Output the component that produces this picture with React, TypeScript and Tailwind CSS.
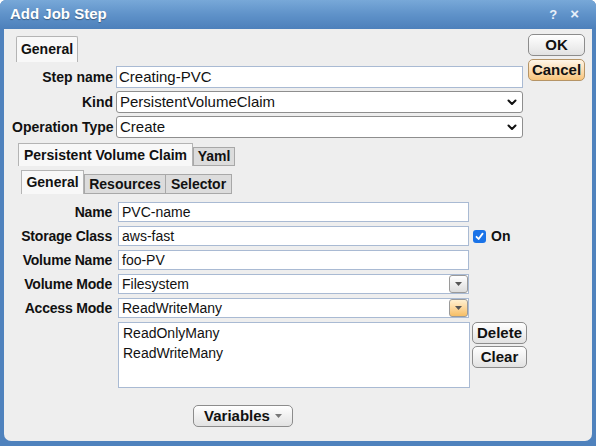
import React from 'react';

const font = "font-['Liberation_Sans',Arial,sans-serif]";

function Chevron() {
  return (
    <svg width="10" height="7" viewBox="0 0 10 7" fill="none">
      <path d="M1.5 1.5L5 5L8.5 1.5" stroke="#111" strokeWidth="2" strokeLinecap="round" strokeLinejoin="round" />
    </svg>
  );
}

function Row({ label, children }: { label: string; children: React.ReactNode }) {
  return (
    <div className="flex items-center h-[22px]">
      <div className="w-[101px] text-right text-[14px] font-bold text-[#111] whitespace-nowrap">{label}</div>
      <div className="ml-[3px] flex-1">{children}</div>
    </div>
  );
}

function SubRow({ label, children }: { label: string; children: React.ReactNode }) {
  return (
    <div className="flex items-center h-[20px]">
      <div className="w-[100px] text-right text-[14px] font-bold text-[#111] whitespace-nowrap tracking-[-0.2px]">{label}</div>
      <div className="ml-[6px] flex items-center">{children}</div>
    </div>
  );
}

function TextBox({ value, w }: { value: string; w: string }) {
  return (
    <div className={`${w} h-[20px] bg-white border border-[#a9bad3] px-[3px] text-[14px] leading-[18px] text-[#111]`}>{value}</div>
  );
}

function ComboBox({ value, orange }: { value: string; orange?: boolean }) {
  return (
    <div className="w-[351px] h-[20px] bg-white border border-[#a9bad3] flex items-center pl-[3px] text-[14px] text-[#111]">
      <span className="flex-1">{value}</span>
      <div
        className={`w-[19px] h-[18px] rounded-[3px] border border-[#9a9a9a] flex items-center justify-center ${
          orange ? 'bg-gradient-to-b from-[#fff0d0] to-[#f7be63]' : 'bg-gradient-to-b from-white to-[#dcdcdc]'
        }`}
      >
        <svg width="7" height="4" viewBox="0 0 7 4"><path d="M0 0H7L3.5 4Z" fill="#555" /></svg>
      </div>
    </div>
  );
}

function Button({ children, orange, className = '' }: { children: React.ReactNode; orange?: boolean; className?: string }) {
  return (
    <div
      className={`h-[22px] shrink-0 rounded-[5px] border flex items-center justify-center text-[15px] font-bold text-[#111] ${
        orange
          ? 'border-[#b59466] bg-gradient-to-b from-[#fff6e8] to-[#f8c47a]'
          : 'border-[#8c8c8c] bg-gradient-to-b from-white to-[#e2e2e2]'
      } ${className}`}
    >
      {children}
    </div>
  );
}

export default function App() {
  return (
    <div className={`w-[596px] h-[446px] bg-[#4f82bd] flex flex-col rounded-t-[6px] overflow-hidden ${font}`}>
      {/* Title bar */}
      <div className="h-[29px] shrink-0 bg-gradient-to-b from-[#78a8d8] via-[#5f92c9] to-[#4d80bb] flex items-center px-[10px]">
        <span className="text-white font-bold text-[15px] [text-shadow:0_1px_1px_rgba(0,0,0,0.35)]">Add Job Step</span>
        <span className="ml-auto text-[#e8f0fa] font-bold text-[13px] mr-[13px]">?</span>
        <span className="text-[#e8f0fa] font-bold text-[15px] mr-[7px]">×</span>
      </div>

      {/* Panel */}
      <div className="flex-1 mx-[4px] mb-[5px] bg-[#eeeeee] rounded-b-[7px] flex pl-[8px] pr-[7px] pt-[7px]">
        <div className="w-[511px] flex flex-col">
          {/* top tab */}
          <div className="ml-[4px] w-[62px] h-[26px] border border-b-0 border-[#b4b4b4] bg-[#f8f8f8] rounded-t-[2px] flex items-center justify-center text-[14px] font-bold text-[#111]">
            General
          </div>

          <div className="mt-[4px] flex flex-col gap-[3px]">
            <Row label="Step name">
              <div className="h-[22px] bg-white border border-[#a9bad3] px-[2px] text-[15px] leading-[20px] text-[#111]">Creating-PVC</div>
            </Row>
            <Row label="Kind">
              <div className="h-[22px] bg-white border border-[#8e8e8e] rounded-[3px] flex items-center pl-[3px] pr-[5px] text-[15px] text-[#111]">
                <span className="flex-1">PersistentVolumeClaim</span>
                <Chevron />
              </div>
            </Row>
            <Row label="Operation Type">
              <div className="h-[22px] bg-white border border-[#8e8e8e] rounded-[3px] flex items-center pl-[3px] pr-[5px] text-[15px] text-[#111]">
                <span className="flex-1">Create</span>
                <Chevron />
              </div>
            </Row>
          </div>

          {/* second tabs */}
          <div className="mt-[5px] ml-[6px] flex items-end">
            <div className="w-[175px] h-[23px] border border-b-0 border-[#b4b4b4] bg-[#f8f8f8] flex items-center justify-center text-[14px] font-bold text-[#111]">
              Persistent Volume Claim
            </div>
            <div className="w-[42px] h-[19px] border border-[#a8a8a8] bg-[#dcdcdc] flex items-center justify-center text-[14px] font-bold text-[#111]">
              Yaml
            </div>
          </div>

          {/* third tabs */}
          <div className="mt-[4px] ml-[9px] flex items-end">
            <div className="w-[63px] h-[24px] border border-b-0 border-[#b4b4b4] bg-[#f8f8f8] flex items-center justify-center text-[14px] font-bold text-[#111]">
              General
            </div>
            <div className="w-[82px] h-[20px] border border-[#a8a8a8] bg-[#dcdcdc] flex items-center justify-center text-[14px] font-bold text-[#111]">
              Resources
            </div>
            <div className="w-[66px] h-[20px] border border-l-0 border-[#a8a8a8] bg-[#dcdcdc] flex items-center justify-center text-[14px] font-bold text-[#111]">
              Selector
            </div>
          </div>

          {/* inner form */}
          <div className="mt-[8px] flex flex-col gap-[4px]">
            <SubRow label="Name">
              <TextBox value="PVC-name" w="w-[351px]" />
            </SubRow>
            <SubRow label="Storage Class">
              <TextBox value="aws-fast" w="w-[351px]" />
              <div className="ml-[4px] w-[13px] h-[13px] rounded-[3px] bg-[#1a73e8] flex items-center justify-center">
                <svg width="9" height="9" viewBox="0 0 9 9" fill="none">
                  <path d="M1.5 4.8L3.6 7L7.6 1.6" stroke="white" strokeWidth="1.8" strokeLinecap="round" strokeLinejoin="round" />
                </svg>
              </div>
              <span className="ml-[5px] text-[14px] font-bold text-[#111]">On</span>
            </SubRow>
            <SubRow label="Volume Name">
              <TextBox value="foo-PV" w="w-[351px]" />
            </SubRow>
            <SubRow label="Volume Mode">
              <ComboBox value="Filesystem" />
            </SubRow>
            <SubRow label="Access Mode">
              <ComboBox value="ReadWriteMany" orange />
            </SubRow>
          </div>

          {/* list box */}
          <div className="mt-[4px] ml-[106px] flex items-start">
            <div className="w-[352px] shrink-0 h-[66px] bg-white border border-[#a9bad3] pl-[4px] pt-[0px] text-[14px] leading-[20px] text-[#111]">
              <div>ReadOnlyMany</div>
              <div>ReadWriteMany</div>
            </div>
            <div className="ml-[2px] flex flex-col gap-[2px] shrink-0">
              <Button className="w-[55px]">Delete</Button>
              <Button className="w-[55px]">Clear</Button>
            </div>
          </div>

          <div className="mt-[17px] ml-[181px]">
            <Button className="w-[100px] gap-[5px]">
              Variables
              <svg width="7" height="4" viewBox="0 0 7 4"><path d="M0 0H7L3.5 4Z" fill="#777" /></svg>
            </Button>
          </div>
        </div>

        {/* right buttons */}
        <div className="ml-[5px] -mt-[2px] w-[57px] flex flex-col gap-[3px]">
          <Button>OK</Button>
          <Button orange>Cancel</Button>
        </div>
      </div>
    </div>
  );
}
